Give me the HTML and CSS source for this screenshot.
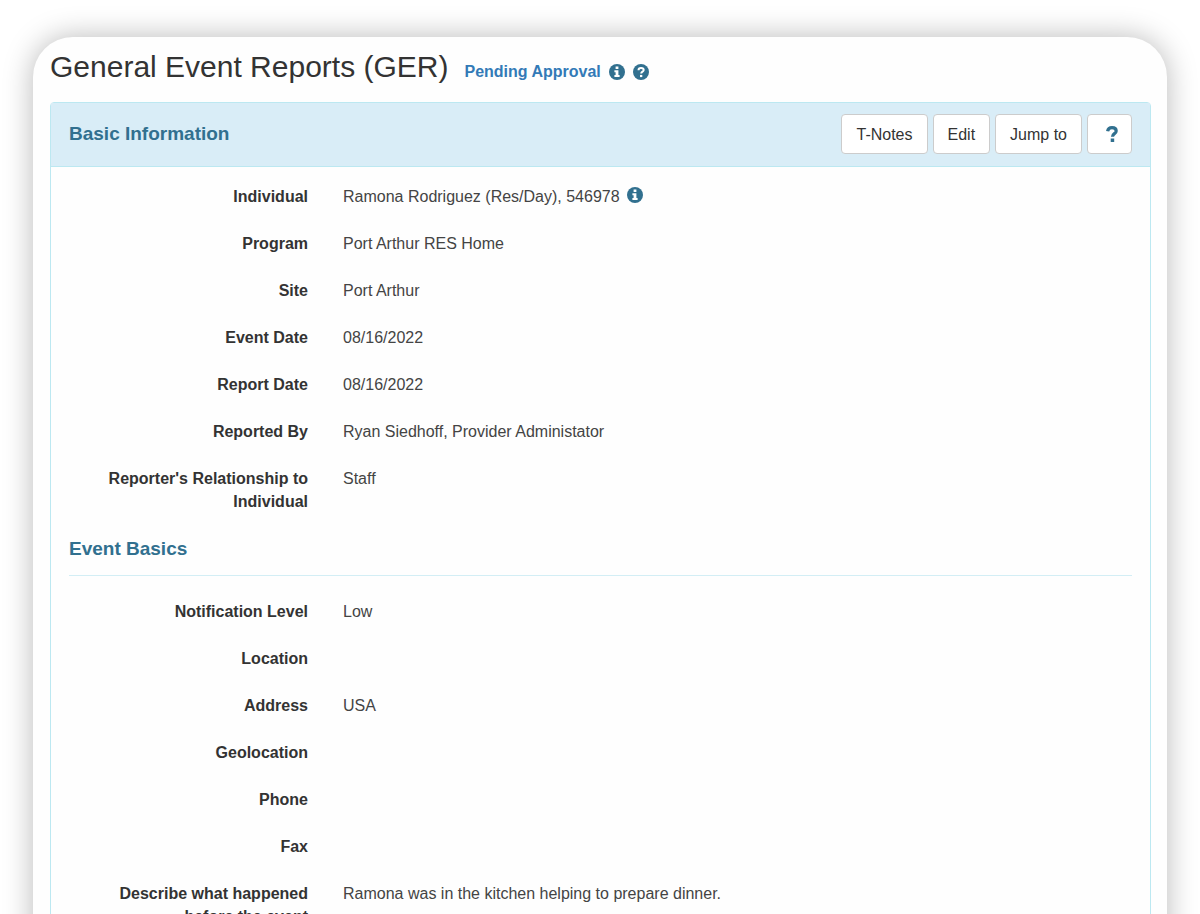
FILE: index.html
```
<!DOCTYPE html>
<html lang="en">
<head>
    <meta charset="UTF-8">
    <meta name="viewport" content="width=device-width, initial-scale=1">
    <title>General Event Reports (GER)</title>
    <link rel="stylesheet" href="styles.css">
</head>
<body>
    <!-- Shared icon shapes -->
    <svg class="icon-defs" aria-hidden="true">
        <symbol id="icon-info" viewBox="0 0 16 16">
            <circle cx="8" cy="8" r="8" fill="#31708f"/>
            <path d="M6.6 2.5h2.8v2.4H6.6zM5.4 6.3h4v4.8h1.2v2H5.4v-2h1.2V8.3H5.4z" fill="#fff"/>
        </symbol>
        <symbol id="icon-help" viewBox="0 0 16 16">
            <circle cx="8" cy="8" r="8" fill="#31708f"/>
            <path d="M5.5 6.2C5.5 4.6 6.5 3.9 8 3.9s2.7.8 2.7 2.1c0 1.8-2.5 1.6-2.5 3.6" fill="none" stroke="#fff" stroke-width="2"/>
            <path d="M7 10.9h2.3v2.2H7z" fill="#fff"/>
        </symbol>
        <symbol id="icon-question" viewBox="0 0 12 16">
            <path d="M1.6 5.2C2 3 3.6 1.7 6 1.7c2.5 0 4.2 1.2 4.2 3.2 0 2.9-3.7 2.6-3.7 5.8" fill="none" stroke="#31708f" stroke-width="3.2"/>
            <path d="M4.7 12.500h3.500V16H4.700z" fill="#31708f"/>
        </symbol>
    </svg>

    <main class="card">
        <header class="page-header">
            <h1>General Event Reports (GER)</h1>
            <div class="status">
                <a href="#">Pending Approval</a>
                <svg class="icon" role="img" aria-label="Info"><use href="#icon-info"/></svg>
                <svg class="icon" role="img" aria-label="Help"><use href="#icon-help"/></svg>
            </div>
        </header>

        <section class="panel">
            <div class="panel-heading">
                <h2>Basic Information</h2>
                <div class="actions">
                    <button type="button" class="btn">T-Notes</button>
                    <button type="button" class="btn">Edit</button>
                    <button type="button" class="btn">Jump to</button>
                    <button type="button" class="btn btn-help" aria-label="Help">
                        <svg class="icon-question"><use href="#icon-question"/></svg>
                    </button>
                </div>
            </div>

            <div class="panel-body">
                <dl class="fields">
                    <dt>Individual</dt>
                    <dd>Ramona Rodriguez (Res/Day), 546978 <svg class="icon" role="img" aria-label="Info"><use href="#icon-info"/></svg></dd>
                    <dt>Program</dt>
                    <dd>Port Arthur RES Home</dd>
                    <dt>Site</dt>
                    <dd>Port Arthur</dd>
                    <dt>Event Date</dt>
                    <dd>08/16/2022</dd>
                    <dt>Report Date</dt>
                    <dd>08/16/2022</dd>
                    <dt>Reported By</dt>
                    <dd>Ryan Siedhoff, Provider Administator</dd>
                    <dt>Reporter's Relationship to Individual</dt>
                    <dd>Staff</dd>
                </dl>

                <h2 class="section-title">Event Basics</h2>

                <dl class="fields">
                    <dt>Notification Level</dt>
                    <dd>Low</dd>
                    <dt>Location</dt>
                    <dd></dd>
                    <dt>Address</dt>
                    <dd>USA</dd>
                    <dt>Geolocation</dt>
                    <dd></dd>
                    <dt>Phone</dt>
                    <dd></dd>
                    <dt>Fax</dt>
                    <dd></dd>
                    <dt>Describe what happened before the event</dt>
                    <dd>Ramona was in the kitchen helping to prepare dinner.</dd>
                </dl>
            </div>
        </section>
    </main>
</body>
</html>
```
FILE: styles.css
```
* {
    box-sizing: border-box;
}

body {
    margin: 0;
    padding: 37px 33px;
    background-color: #fff;
    color: #333;
    font-family: "Liberation Sans", Arial, sans-serif;
    font-size: 16px;
    line-height: 23px;
}

h1, h2, dl, dd {
    margin: 0;
}

.icon-defs {
    display: none;
}

.card {
    padding: 12px 16px 40px 17px;
    border-radius: 40px;
    background-color: #fefefe;
    box-shadow: 0 0 30px rgba(0, 0, 0, 0.28);
}

.page-header {
    display: flex;
    align-items: baseline;
    flex-wrap: wrap;
    gap: 16px;
    margin-bottom: 17px;
}

h1 {
    font-size: 30px;
    font-weight: normal;
    line-height: 36px;
}

.status {
    display: flex;
    align-items: center;
    gap: 8px;
    font-weight: bold;
}

.status a {
    color: #337ab7;
    text-decoration: none;
}

.status a:hover {
    text-decoration: underline;
}

.icon {
    width: 16px;
    height: 16px;
}

.panel {
    border: 1px solid #bce8f1;
    border-radius: 4px;
}

.panel-heading {
    display: flex;
    justify-content: space-between;
    padding: 11px 18px 12px;
    border-bottom: 1px solid #bce8f1;
    background-color: #d9edf7;
}

h2 {
    color: #31708f;
    font-size: 19px;
    line-height: 23px;
}

.panel-heading h2 {
    margin-top: 8px;
}

.actions {
    display: flex;
    gap: 5px;
}

.btn {
    height: 40px;
    padding: 0 14px;
    border: 1px solid #ccc;
    border-radius: 4px;
    background-color: #fff;
    color: #333;
    font: inherit;
    cursor: pointer;
}

.btn:hover {
    background-color: #e6e6e6;
}

.btn-help {
    display: flex;
    align-items: center;
    padding: 0 13px 0 18px;
}

.icon-question {
    width: 12px;
    height: 16px;
}

.panel-body {
    padding: 18px;
}

.fields {
    display: grid;
    grid-template-columns: 239px 1fr;
    gap: 24px 35px;
}

.fields dt {
    padding-left: 24px;
    font-weight: bold;
    text-align: right;
}

.fields dd {
    color: #444;
}

.fields dd .icon {
    margin-left: 3px;
    vertical-align: -1px;
}

.section-title {
    margin: 24px 0;
    padding-bottom: 15px;
    border-bottom: 1px solid #d3eef5;
}
```
